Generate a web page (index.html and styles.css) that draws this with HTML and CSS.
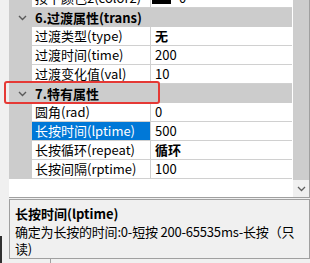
FILE: index.html
```html
<!DOCTYPE html>
<html>
<head>
<meta charset="utf-8">
<link rel="stylesheet" href="styles.css">
</head>
<body>
<div class="page">
  <div class="grid">
    <div class="list">
      <div class="rows">
        <div class="row"><div class="gut"></div><div class="name">按下颜色2(color2)</div><div class="val"><span class="swatch"></span>0</div></div>
        <div class="cat"><span class="chev"><svg width="9" height="6" viewBox="0 0 9 6"><path d="M1 1 L4.5 4.5 L8 1" fill="none" stroke="#5a5a5a" stroke-width="1.4"/></svg></span><span class="cat-title">6.过渡属性(trans)</span></div>
        <div class="row"><div class="gut"></div><div class="name">过渡类型(type)</div><div class="val b">无</div></div>
        <div class="row"><div class="gut"></div><div class="name">过渡时间(time)</div><div class="val">200</div></div>
        <div class="row"><div class="gut"></div><div class="name">过渡变化值(val)</div><div class="val">10</div></div>
        <div class="cat"><span class="chev"><svg width="9" height="6" viewBox="0 0 9 6"><path d="M1 1 L4.5 4.5 L8 1" fill="none" stroke="#5a5a5a" stroke-width="1.4"/></svg></span><span class="cat-title">7.特有属性</span></div>
        <div class="row"><div class="gut"></div><div class="name">圆角(rad)</div><div class="val">0</div></div>
        <div class="row"><div class="gut"></div><div class="name sel">长按时间(lptime)</div><div class="val">500</div></div>
        <div class="row"><div class="gut"></div><div class="name">长按循环(repeat)</div><div class="val b">循环</div></div>
        <div class="row"><div class="gut"></div><div class="name">长按间隔(rptime)</div><div class="val">100</div></div>
      </div>
    </div>
    <div class="scrollbar">
      <div class="thumb"></div>
      <div class="arrow"><svg width="9" height="6" viewBox="0 0 9 6"><path d="M1 1 L4.5 4.5 L8 1" fill="none" stroke="#606060" stroke-width="1.3"/></svg></div>
    </div>
  </div>
  <div class="desc">
    <div class="desc-title">长按时间(lptime)</div>
    <div class="desc-text">确定为长按的时间:0-短按 200-65535ms-长按（只读)</div>
  </div>
  <div class="bottom"><div class="bottom-cell"></div></div>
</div>
<div class="highlight"></div>
<div class="edge"></div>
</body>
</html>
```
FILE: styles.css
```css
html, body {
  margin: 0;
  padding: 0;
}
body {
  width: 310px;
  height: 263px;
  overflow: hidden;
  background: #f0f0f0;
  font-family: "Noto Sans CJK SC", "Microsoft YaHei", sans-serif;
  font-size: 13px;
  color: #000;
  position: relative;
}
.page {
  display: flex;
  flex-direction: column;
  padding-left: 9px;
  height: 263px;
  box-sizing: border-box;
}
.grid {
  height: 198px;
  display: flex;
  background: #fff;
  border-right: 1px solid #a0a0a0;
  border-bottom: 1px solid #a0a0a0;
  box-sizing: border-box;
}
.list {
  flex: 1;
  overflow: hidden;
  background: #fff;
}
.rows {
  margin-top: -11px;
}
.row {
  display: grid;
  grid-template-columns: 23px 119px 1fr;
  height: 19px;
}
.gut {
  background: #cccccc;
}
.name, .val {
  border-bottom: 1px solid #d0d0d0;
  line-height: 18px;
  white-space: nowrap;
  overflow: hidden;
}
.name {
  border-right: 1px solid #d0d0d0;
  padding-left: 3px;
}
.name.sel {
  background: #0078d7;
  color: #fff;
}
.val {
  padding-left: 4px;
  display: flex;
  align-items: center;
}
.val.b {
  font-weight: bold;
}
.swatch {
  display: inline-block;
  width: 19px;
  height: 12px;
  background: #000;
  margin-right: 8px;
  margin-left: -3px;
}
.cat {
  height: 19px;
  background: #cccccc;
  display: flex;
  align-items: center;
  font-weight: bold;
}
.chev {
  width: 26px;
  display: flex;
  justify-content: center;
}
.scrollbar {
  width: 16px;
  margin-left: 1px;
  display: flex;
  flex-direction: column;
  background: #f0f0f0;
}
.thumb {
  flex: 1;
  background: #cdcdcd;
}
.arrow {
  height: 17px;
  display: flex;
  align-items: center;
  justify-content: center;
}
.desc {
  margin-top: 1px;
  height: 60px;
  border: 1px solid #a0a0a0;
  box-sizing: border-box;
  padding: 5px 1px 0 5px;
}
.desc-title {
  font-weight: bold;
  line-height: 18px;
}
.desc-text {
  line-height: 17px;
  letter-spacing: -0.2px;
}
.bottom {
  flex: 1;
  display: flex;
}
.bottom-cell {
  width: 41px;
  border-right: 1px solid #a0a0a0;
}
.highlight {
  position: absolute;
  left: 4px;
  top: 81px;
  width: 156px;
  height: 23px;
  border: 2px solid #e53935;
  border-radius: 3px;
  box-sizing: border-box;
}
.edge {
  position: absolute;
  left: 0;
  top: 236px;
  width: 2px;
  height: 27px;
  background: #303030;
}
```
